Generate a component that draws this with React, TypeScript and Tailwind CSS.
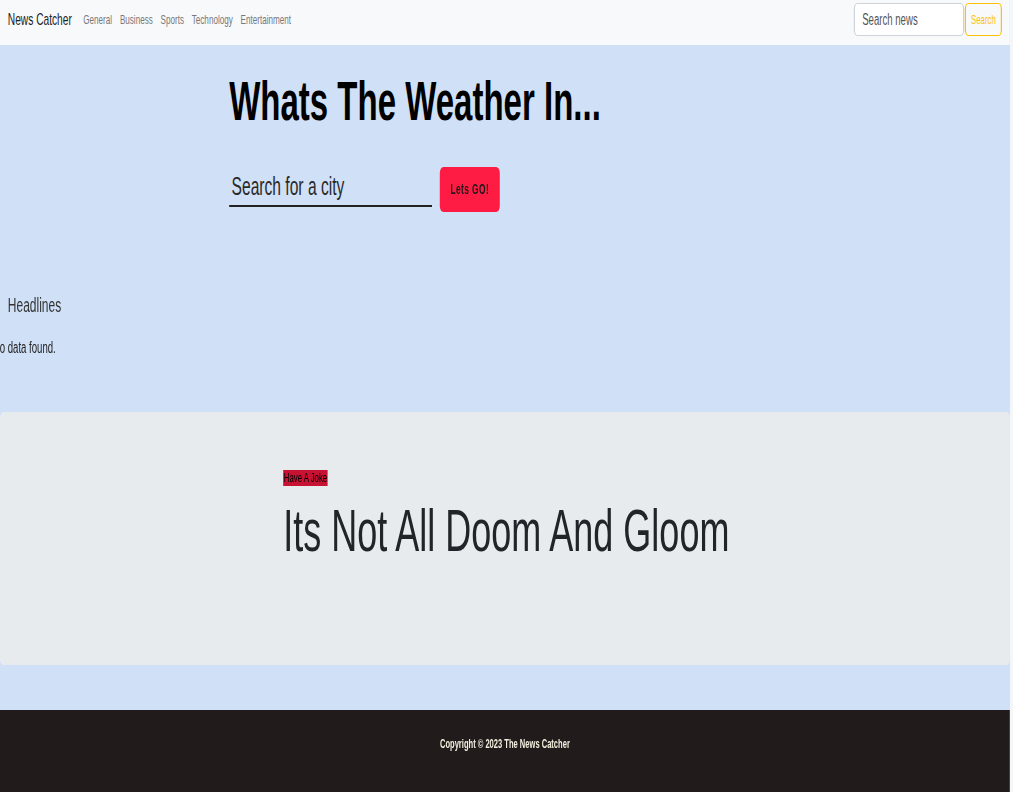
import React from "react";

export default function App() {
  const links = ["General", "Business", "Sports", "Technology", "Entertainment"];
  return (
    <div className="w-[1013px] h-[792px] overflow-hidden bg-[#f5f6f8] font-['Liberation_Sans',Arial,sans-serif]">
      <div className="w-[1683px] origin-top-left scale-x-[0.6] flex flex-col bg-[#d0e0f7]">
        {/* Navbar */}
        <nav className="h-[45px] bg-[#f8f9fa] flex items-start justify-between px-[13px] pt-[3px]">
          <div className="flex items-start">
            <a className="mt-[5px] text-[17px] leading-[24px] text-[#222] mr-[19px]">News Catcher</a>
            <div className="mt-[7px] flex gap-[13px] text-[13.5px] leading-[20px] text-[#77777c]">
              {links.map((l) => (
                <a key={l}>{l}</a>
              ))}
            </div>
          </div>
          <form className="flex items-start">
            <input
              placeholder="Search news"
              className="w-[184px] h-[33px] border border-x-2 border-[#ced4da] rounded-[6px] px-[12px] text-[16px] bg-white outline-none placeholder:text-[#555]"
            />
            <button
              type="button"
              className="ml-[1px] w-[62px] h-[33px] border border-x-2 border-[#ffc107] text-[#ffc107] rounded-[6px] text-[13px] bg-transparent"
            >
              Search
            </button>
          </form>
        </nav>

        {/* Weather + headlines */}
        <section className="flex flex-col pt-[23px] pb-[52px]">
          <div className="pl-[382px]">
            <h1 className="text-[55px] leading-[66px] font-bold text-black">Whats The Weather In...</h1>
            <div className="mt-[33px] flex items-start gap-[13px]">
              <input
                placeholder="Search for a city"
                className="w-[338px] h-[40px] border-0 border-b-2 border-[#222] bg-transparent px-[4px] text-[26px] outline-none placeholder:text-[#2a2a2a]"
              />
              <button
                type="button"
                className="w-[100px] h-[45px] rounded-[6px] bg-[#ff1c44] text-[#1a1a1a] text-[14px] font-bold tracking-[0.05em]"
              >
                Lets GO!
              </button>
            </div>
          </div>
          <div className="mt-[79px] pl-[13px] text-[20px] leading-[28px] text-[#333]">Headlines</div>
          <div className="mt-[17px] -ml-[12px] text-[16px] leading-[24px] text-[#222]">No data found.</div>
        </section>

        {/* Joke */}
        <section className="h-[253px] bg-[#e8ebee] rounded-[6px] pl-[472px] pt-[58px] flex flex-col items-start">
          <span className="h-[16px] px-[1px] bg-[#c81234] text-black text-[13px] leading-[16px]">Have A Joke</span>
          <h2 className="mt-[10px] text-[60px] leading-[70px] font-light text-[#212529]">Its Not All Doom And Gloom</h2>
        </section>

        <div className="h-[45px]" />

        {/* Footer */}
        <footer className="h-[82px] bg-[#211b1b] pt-[24px] text-center">
          <p className="text-[12.6px] leading-[20px] font-bold text-[#f3f0e0]">Copyright © 2023 The News Catcher</p>
        </footer>
      </div>
    </div>
  );
}
